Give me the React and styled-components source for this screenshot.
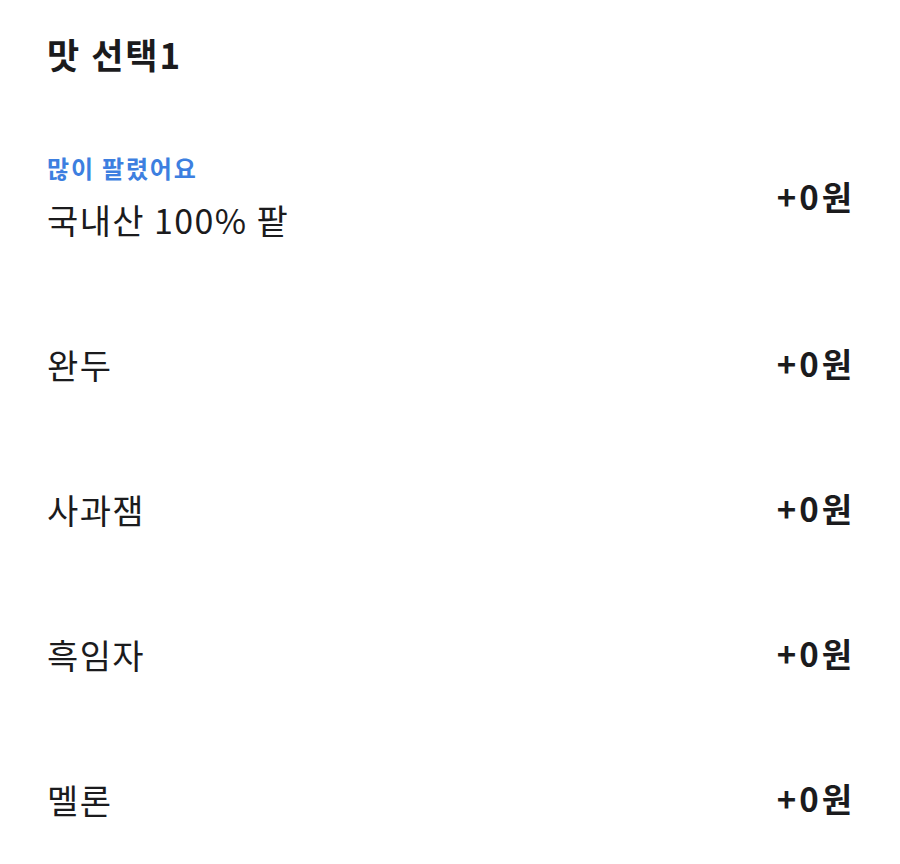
import React from 'react';
import styled, { createGlobalStyle } from 'styled-components';

const GlobalStyle = createGlobalStyle`
  * { box-sizing: border-box; }
  body {
    margin: 0;
    background: #ffffff;
    font-family: "Noto Sans CJK KR", "Noto Sans", sans-serif;
    color: #1b1b1d;
  }
`;

const options = [
  { name: '국내산 100% 팥', price: '+0원', badge: '많이 팔렸어요' },
  { name: '완두', price: '+0원' },
  { name: '사과잼', price: '+0원' },
  { name: '흑임자', price: '+0원' },
  { name: '멜론', price: '+0원' },
];

const App = () => {
  return (
    <>
      <GlobalStyle />
      <Section>
        <Title>맛 선택1</Title>
        <OptionList>
          {options.map((opt) => (
            <OptionRow key={opt.name}>
              <OptionInfo>
                {opt.badge && <Badge>{opt.badge}</Badge>}
                <OptionName>{opt.name}</OptionName>
              </OptionInfo>
              <Price>{opt.price}</Price>
            </OptionRow>
          ))}
        </OptionList>
      </Section>
    </>
  );
};

export default App;

/** the whole block, left/right padding matches the screenshot */
const Section = styled.div`
  padding: 30px 48px 0 47px;
  height: 864px;
  overflow: hidden;
`;

const Title = styled.h1`
  margin: 0 0 25px;
  font-size: 35px;
  line-height: 48px;
  font-weight: 700;
  letter-spacing: 2px;
`;

const OptionList = styled.div`
  display: flex;
  flex-direction: column;
`;

/** each row centers the name and the price */
const OptionRow = styled.div`
  display: flex;
  align-items: center;
  justify-content: space-between;
  padding: 50px 0;
`;

const OptionInfo = styled.div`
  display: flex;
  flex-direction: column;
  gap: 14px;
`;

const Badge = styled.span`
  font-size: 24px;
  line-height: 30px;
  font-weight: 700;
  color: #3d7fe0;
  letter-spacing: 1.8px;
`;

const OptionName = styled.span`
  font-size: 34px;
  line-height: 45px;
  font-weight: 400;
  letter-spacing: 1.4px;
`;

const Price = styled.span`
  font-size: 33px;
  line-height: 45px;
  font-weight: 700;
  letter-spacing: 3px;
  margin-right: -3px;
  margin-top: -3px;
`;
